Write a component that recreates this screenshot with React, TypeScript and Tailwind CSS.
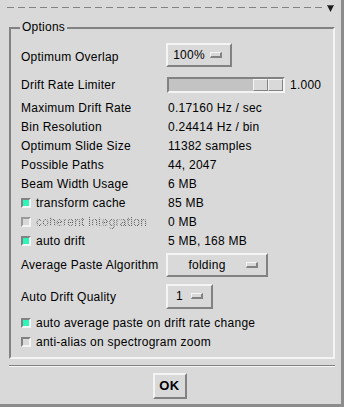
import React from "react";

const raised =
  "border-2 border-t-[#f4f4f4] border-l-[#f4f4f4] border-b-[#828282] border-r-[#828282]";
const sunken =
  "border-2 border-t-[#828282] border-l-[#828282] border-b-[#f4f4f4] border-r-[#f4f4f4]";

function Indicator() {
  return (
    <span className="w-[12px] h-[6px] mr-[8px] border-t border-l border-t-[#f4f4f4] border-l-[#f4f4f4] border-b-2 border-r-2 border-b-[#828282] border-r-[#828282]" />
  );
}

function MenuButton({ text, cls }: { text: string; cls: string }) {
  return (
    <div className={`${raised} ${cls} flex items-center`}>
      <span className="flex-1 text-center leading-[14px]">{text}</span>
      <Indicator />
    </div>
  );
}

function Check({ on, disabled }: { on?: boolean; disabled?: boolean }) {
  return (
    <span
      className={`w-[10px] h-[10px] shrink-0 border-2 ${
        disabled
          ? "border-t-[#9a9a9a] border-l-[#9a9a9a] border-b-[#f4f4f4] border-r-[#f4f4f4] bg-[#d9d9d9]"
          : "border-t-[#828282] border-l-[#828282] border-b-[#f4f4f4] border-r-[#f4f4f4]"
      } ${on ? "bg-[#2ef5b8]" : "bg-[#d9d9d9]"}`}
    />
  );
}

function Row({
  label,
  children,
  cls,
  labelCls,
}: {
  label: React.ReactNode;
  children?: React.ReactNode;
  cls: string;
  labelCls?: string;
}) {
  return (
    <div className={`flex items-center ${cls}`}>
      <div className={`w-[145px] shrink-0 flex items-center leading-[14px] ${labelCls ?? ""}`}>{label}</div>
      {children}
    </div>
  );
}

function Val({ children }: { children: React.ReactNode }) {
  return <span className="pl-[2px] leading-[14px]">{children}</span>;
}

function CheckLabel({ text, on, disabled }: { text: string; on?: boolean; disabled?: boolean }) {
  return (
    <span className="flex items-center">
      <Check on={on} disabled={disabled} />
      <span
        className={`ml-[5px] leading-[14px] ${
          disabled
            ? "text-transparent bg-clip-text bg-[repeating-conic-gradient(#5a5a5a_0_25%,#cfcfcf_0_50%)] bg-[length:2px_2px]"
            : ""
        }`}
      >
        {text}
      </span>
    </span>
  );
}

export default function App() {
  return (
    <div className="w-[344px] h-[407px] bg-[#d9d9d9] text-black text-[12px] tracking-[0.25px] font-['Liberation_Sans',Arial,sans-serif] flex flex-col border-r-[3px] border-b-[3px] border-r-[#8c8c8c] border-b-[#8c8c8c] overflow-hidden">
      <div className="h-[15px] shrink-0">
        <svg width="344" height="15" className="block">
          <line x1="7" y1="7.5" x2="326" y2="7.5" stroke="#828282" strokeWidth="1" strokeDasharray="7 4" />
          <polygon points="327,5 334,5 330.5,12" fill="#1a1a1a" />
          <line x1="327" y1="5.5" x2="334" y2="5.5" stroke="#555" />
        </svg>
      </div>

      <div className={`relative mt-[12px] ml-[9px] w-[326px] h-[332px] shrink-0 ${sunken} pl-[10px] pt-[12px] flex flex-col`}>
        <span className="absolute left-[9px] -top-[9px] px-[2px] bg-[#d9d9d9] leading-[14px]">Options</span>

        <Row label="Optimum Overlap" cls="h-[31px]" labelCls="pt-[1px]">
          <MenuButton text="100%" cls="w-[66px] h-[24px] -mt-[3px]" />
        </Row>
        <Row label="Drift Rate Limiter" cls="h-[26px]">
          <div className={`ml-[1px] w-[118px] h-[16px] ${sunken} bg-[#c3c3c3] flex justify-end`}>
            <div className="w-[30px] h-full flex">
              <div className="flex-1 bg-[#d9d9d9] border border-t-[#f4f4f4] border-l-[#f4f4f4] border-b-[#828282] border-r-[#828282]" />
              <div className="flex-1 bg-[#d9d9d9] border border-t-[#f4f4f4] border-l-[#f4f4f4] border-b-[#828282] border-r-[#828282]" />
            </div>
          </div>
          <span className="ml-[5px] leading-[14px]">1.000</span>
        </Row>
        <Row label="Maximum Drift Rate" cls="h-[19px]">
          <Val>0.17160 Hz / sec</Val>
        </Row>
        <Row label="Bin Resolution" cls="h-[19px]">
          <Val>0.24414 Hz / bin</Val>
        </Row>
        <Row label="Optimum Slide Size" cls="h-[19px]">
          <Val>11382 samples</Val>
        </Row>
        <Row label="Possible Paths" cls="h-[19px]">
          <Val>44, 2047</Val>
        </Row>
        <Row label="Beam Width Usage" cls="h-[19px]">
          <Val>6 MB</Val>
        </Row>
        <Row label={<CheckLabel text="transform cache" on />} cls="h-[19px]">
          <Val>85 MB</Val>
        </Row>
        <Row label={<CheckLabel text="coherent integration" disabled />} cls="h-[19px]">
          <Val>0 MB</Val>
        </Row>
        <Row label={<CheckLabel text="auto drift" on />} cls="h-[19px]">
          <Val>5 MB, 168 MB</Val>
        </Row>
        <Row label="Average Paste Algorithm" cls="h-[29px]">
          <MenuButton text="folding" cls="w-[102px] h-[24px]" />
        </Row>
        <Row label="Auto Drift Quality" cls="h-[34px]" labelCls="pt-[2px]">
          <MenuButton text="1" cls="w-[47px] h-[25px]" />
        </Row>
        <div className="h-[19px] flex items-center">
          <CheckLabel text="auto average paste on drift rate change" on />
        </div>
        <div className="h-[19px] flex items-center">
          <CheckLabel text="anti-alias on spectrogram zoom" />
        </div>
      </div>

      <div className="mt-[6px] ml-[9px] w-[326px] h-[2px] shrink-0 border-t border-t-[#828282] border-b border-b-[#f4f4f4]" />

      <div className="mt-[6px] flex justify-center">
        <div className={`${raised} ml-[-2px] w-[34px] h-[26px] flex items-center justify-center font-bold text-[13px] tracking-[0.5px] leading-[14px]`}>
          OK
        </div>
      </div>
    </div>
  );
}
